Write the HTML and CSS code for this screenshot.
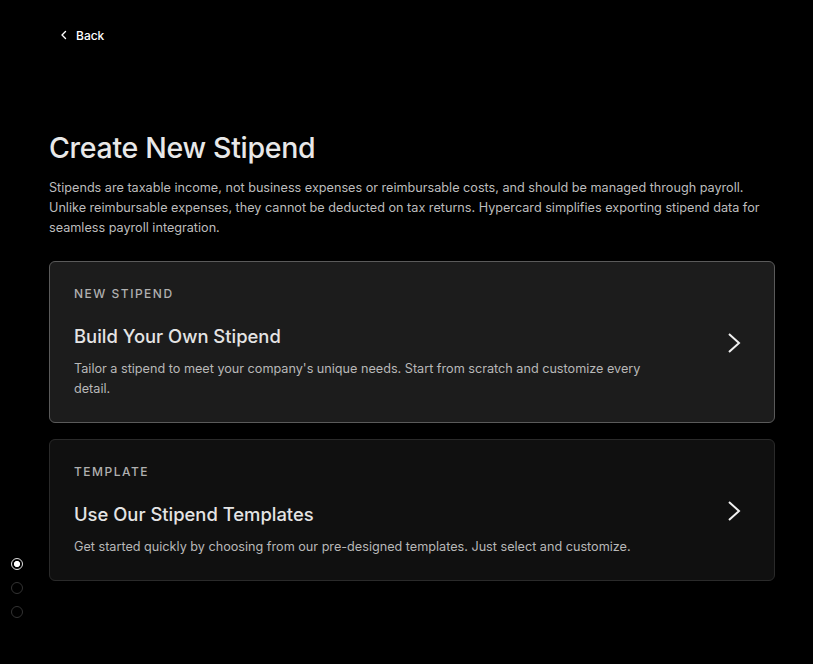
FILE: index.html
```html
<!DOCTYPE html>
<html lang="en">
<head>
    <meta charset="UTF-8">
    <meta name="viewport" content="width=device-width, initial-scale=1.0">
    <title>Create New Stipend</title>
    <link rel="stylesheet" href="styles.css">
</head>
<body>
    <nav class="steps">
        <span class="step active"></span>
        <span class="step"></span>
        <span class="step"></span>
    </nav>

    <main class="page">
        <a class="back" href="#">
            <svg width="12" height="12" viewBox="0 0 12 12"><path d="M7.5 2.5 4 6l3.5 3.5" fill="none" stroke="currentColor" stroke-width="1.4" stroke-linecap="round" stroke-linejoin="round"/></svg>
            Back
        </a>

        <h1 class="title">Create New Stipend</h1>
        <p class="intro">Stipends are taxable income, not business expenses or reimbursable costs, and should be managed through payroll. Unlike reimbursable expenses, they cannot be deducted on tax returns. Hypercard simplifies exporting stipend data for seamless payroll integration.</p>

        <div class="options">
            <a class="option selected" href="#">
                <div class="option-body">
                    <div class="option-label">NEW STIPEND</div>
                    <div class="option-title">Build Your Own Stipend</div>
                    <div class="option-desc">Tailor a stipend to meet your company's unique needs. Start from scratch and customize every detail.</div>
                </div>
                <svg class="chevron" width="16" height="24" viewBox="0 0 16 24"><path d="M3 3l10 9-10 9" fill="none" stroke="currentColor" stroke-width="2"/></svg>
            </a>
            <a class="option" href="#">
                <div class="option-body">
                    <div class="option-label">TEMPLATE</div>
                    <div class="option-title">Use Our Stipend Templates</div>
                    <div class="option-desc">Get started quickly by choosing from our pre-designed templates. Just select and customize.</div>
                </div>
                <svg class="chevron" width="16" height="24" viewBox="0 0 16 24"><path d="M3 3l10 9-10 9" fill="none" stroke="currentColor" stroke-width="2"/></svg>
            </a>
        </div>
    </main>
</body>
</html>
```

FILE: styles.css
```css
body {
    margin: 0;
    background: #000;
    color: #e6e6e6;
    font-family: Inter, "Noto Sans", sans-serif;
    min-height: 664px;
}
a {
    color: inherit;
    text-decoration: none;
}
.steps {
    position: fixed;
    left: 11px;
    top: 558px;
    display: flex;
    flex-direction: column;
    gap: 12px;
}
.step {
    width: 12px;
    height: 12px;
    border: 1px solid #333;
    border-radius: 50%;
    box-sizing: border-box;
}
.step.active {
    border-color: #e0e0e0;
    background: radial-gradient(circle, #fff 0 2.8px, #000 3.3px);
}
.page {
    padding: 25px 38px 0 49px;
}
.back {
    display: inline-flex;
    align-items: center;
    gap: 6px;
    margin-left: 9px;
    font-size: 12px;
    font-weight: 500;
    color: #fff;
}
.title {
    margin: 85px 0 0;
    font-size: 28.5px;
    font-weight: 500;
    color: #e8e8e8;
    letter-spacing: -0.3px;
}
.intro {
    margin: 13px 0 0;
    font-size: 12.65px;
    line-height: 20px;
    color: #bdbdbd;
    max-width: 730px;
}
.options {
    margin-top: 23px;
    display: flex;
    flex-direction: column;
    gap: 16px;
}
.option {
    display: flex;
    align-items: center;
    padding: 24px 32px 23px 24px;
    border: 1px solid #2a2a2a;
    border-radius: 6px;
    background: #101010;
}
.option.selected {
    border-color: #5a5a5a;
    background: #1c1c1c;
}
.option-body {
    flex: 1;
}
.option-label {
    font-size: 12px;
    letter-spacing: 1.5px;
    color: #b0b0b0;
    font-weight: 500;
}
.option-title {
    margin-top: 24px;
    font-size: 18.4px;
    font-weight: 500;
    color: #e4e4e4;
}
.option-desc {
    margin-top: 12px;
    font-size: 12.65px;
    line-height: 20px;
    color: #b8b8b8;
    max-width: 580px;
}
.chevron {
    color: #f0f0f0;
}
```
